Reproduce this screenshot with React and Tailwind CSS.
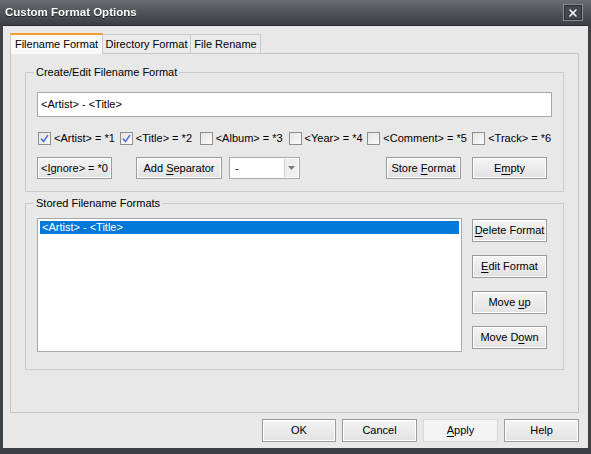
import { X } from 'lucide-react';

const FONT = { fontFamily: '"Liberation Sans", Arial, sans-serif' };

// Classic themed push button: grey outline, white inner bevel, soft gradient
const Btn = ({ children, className = '', flat = false }) => (
  <button
    className={`flex items-center justify-center text-[11px] text-black leading-none ${
      flat
        ? 'border border-[#d8d8d8] bg-[#f3f3f3]'
        : 'border border-[#9a9a9a] bg-gradient-to-b from-[#f4f4f4] to-[#e2e2e2] shadow-[inset_0_0_0_1px_#ffffff]'
    } ${className}`}
  >
    <span className="whitespace-pre">{children}</span>
  </button>
);

const U = ({ children }) => <span className="underline underline-offset-[2px]">{children}</span>;

const Check = ({ label, checked, w }) => (
  <div className={`flex items-center gap-[3px] ${w}`}>
    <span className="flex h-[13px] w-[13px] items-center justify-center border border-[#8e8f8f] bg-gradient-to-br from-[#e4e4e4] to-[#fbfbfb]">
      {checked && (
        <svg width="9" height="9" viewBox="0 0 9 9">
          <path d="M1 4.5 L3.5 7.5 L8 1" fill="none" stroke="#4a6fd0" strokeWidth="1.4" />
        </svg>
      )}
    </span>
    <span className="text-[11px] leading-none text-black whitespace-nowrap">{label}</span>
  </div>
);

const Group = ({ title, className, children }) => (
  <div className={`relative border border-[#cbcbcb] ${className}`}>
    <span className="absolute -top-[8px] left-[8px] bg-[#e8e8e8] px-[2px] text-[11px] leading-[14px] text-black">
      {title}
    </span>
    {children}
  </div>
);

export default function App() {
  return (
    <div className="flex h-[454px] w-[591px] flex-col bg-[#3d4047]" style={FONT}>
      {/* title bar */}
      <div className="flex h-[25px] items-center justify-between bg-gradient-to-b from-[#6a6d73] via-[#505359] to-[#3c3f46] pl-[5px] pr-[8px]">
        <span className="text-[11.5px] font-bold text-white drop-shadow-[0_1px_0_#222]">Custom Format Options</span>
        <span className="flex h-[17px] w-[20px] items-center justify-center border border-[#8a8d93] bg-[#44474e] shadow-[inset_0_0_0_1px_#2c2e33]">
          <X size={12} strokeWidth={3} color="#ffffff" />
        </span>
      </div>

      {/* client area */}
      <div className="mx-[3px] mb-[6px] flex flex-1 flex-col bg-[#e8e8e8] pl-[7px] pr-[9px] pt-[8px] shadow-[inset_0_1px_0_#2a2c30]">
        {/* tabs */}
        <div className="flex h-[20px] items-end">
          <div className="z-10 -mb-px flex h-[21px] w-[93px] items-center justify-center border-x border-t-2 border-[#cbcbcb] border-t-[#f0a030] bg-[#f9f9f9] text-[11px] text-black">
            Filename Format
          </div>
          <div className="flex h-[19px] w-[88px] items-center justify-center border-r border-t border-[#cbcbcb] bg-[#ebebeb] text-[11px] text-black">
            Directory Format
          </div>
          <div className="flex h-[19px] w-[70px] items-center justify-center border-r border-t border-[#cbcbcb] bg-[#ebebeb] text-[11px] text-black">
            File Rename
          </div>
        </div>

        {/* tab page */}
        <div className="flex h-[360px] flex-col border border-[#c4c4c4] bg-[#e8e8e8] px-[14px] pt-[18px]">
          <Group title="Create/Edit Filename Format" className="h-[120px] px-[11px] pt-[19px]">
            <div className="flex h-[25px] w-[515px] items-center border border-[#a8a8a8] bg-white pl-[3px] text-[11px] text-black">
              &lt;Artist&gt; - &lt;Title&gt;
            </div>
            <div className="mt-[15px] flex items-center pl-[1px]">
              <Check label="<Artist> = *1" checked w="w-[82px]" />
              <Check label="<Title> = *2" checked w="w-[80px]" />
              <Check label="<Album> = *3" w="w-[89px]" />
              <Check label="<Year> = *4" w="w-[79px]" />
              <Check label="<Comment> = *5" w="w-[105px]" />
              <Check label="<Track> = *6" w="w-[80px]" />
            </div>
            <div className="mt-[12px] flex h-[22px] items-stretch">
              <Btn className="w-[75px]">
                &lt;<U>I</U>gnore&gt; = *0
              </Btn>
              <Btn className="ml-[24px] w-[86px]">
                Add <U>S</U>eparator
              </Btn>
              <div className="ml-[7px] flex w-[71px] border border-[#a8a8a8] bg-white">
                <span className="flex-1 pl-[5px] text-[11px] leading-[20px] text-black">-</span>
                <span className="m-px flex w-[14px] items-center justify-center border-l border-[#d0d0d0] bg-[#efefef]">
                  <svg width="7" height="4" viewBox="0 0 7 4">
                    <path d="M0 0 H7 L3.5 4 Z" fill="#7a7a7a" />
                  </svg>
                </span>
              </div>
              <Btn className="ml-[86px] w-[75px]">
                Store <U>F</U>ormat
              </Btn>
              <Btn className="ml-[11px] w-[75px]">
                E<U>m</U>pty
              </Btn>
            </div>
          </Group>

          <Group title="Stored Filename Formats" className="mt-[11px] flex h-[167px] gap-[10px] px-[11px] pt-[14px]">
            <div className="h-[134px] w-[425px] border border-[#a8a8a8] bg-white p-[2px]">
              <div className="h-[13px] bg-[#0078d7] pl-[2px] text-[11px] leading-[13px] text-white">
                &lt;Artist&gt; - &lt;Title&gt;
              </div>
            </div>
            <div className="flex flex-col pt-[1px]">
              <Btn className="h-[23px] w-[75px]">
                <U>D</U>elete Format
              </Btn>
              <Btn className="mt-[13px] h-[23px] w-[75px]">
                <U>E</U>dit Format
              </Btn>
              <Btn className="mt-[13px] h-[23px] w-[75px]">
                Move <U>u</U>p
              </Btn>
              <Btn className="mt-[12px] h-[23px] w-[75px]">
                Move D<U>o</U>wn
              </Btn>
            </div>
          </Group>
        </div>

        {/* dialog buttons */}
        <div className="mt-[6px] flex justify-end gap-[6px]">
          <Btn className="h-[23px] w-[74px]">OK</Btn>
          <Btn className="h-[23px] w-[75px]">Cancel</Btn>
          <Btn flat className="h-[23px] w-[75px]">
            <U>A</U>pply
          </Btn>
          <Btn className="h-[23px] w-[75px]">Help</Btn>
        </div>
      </div>
    </div>
  );
}
